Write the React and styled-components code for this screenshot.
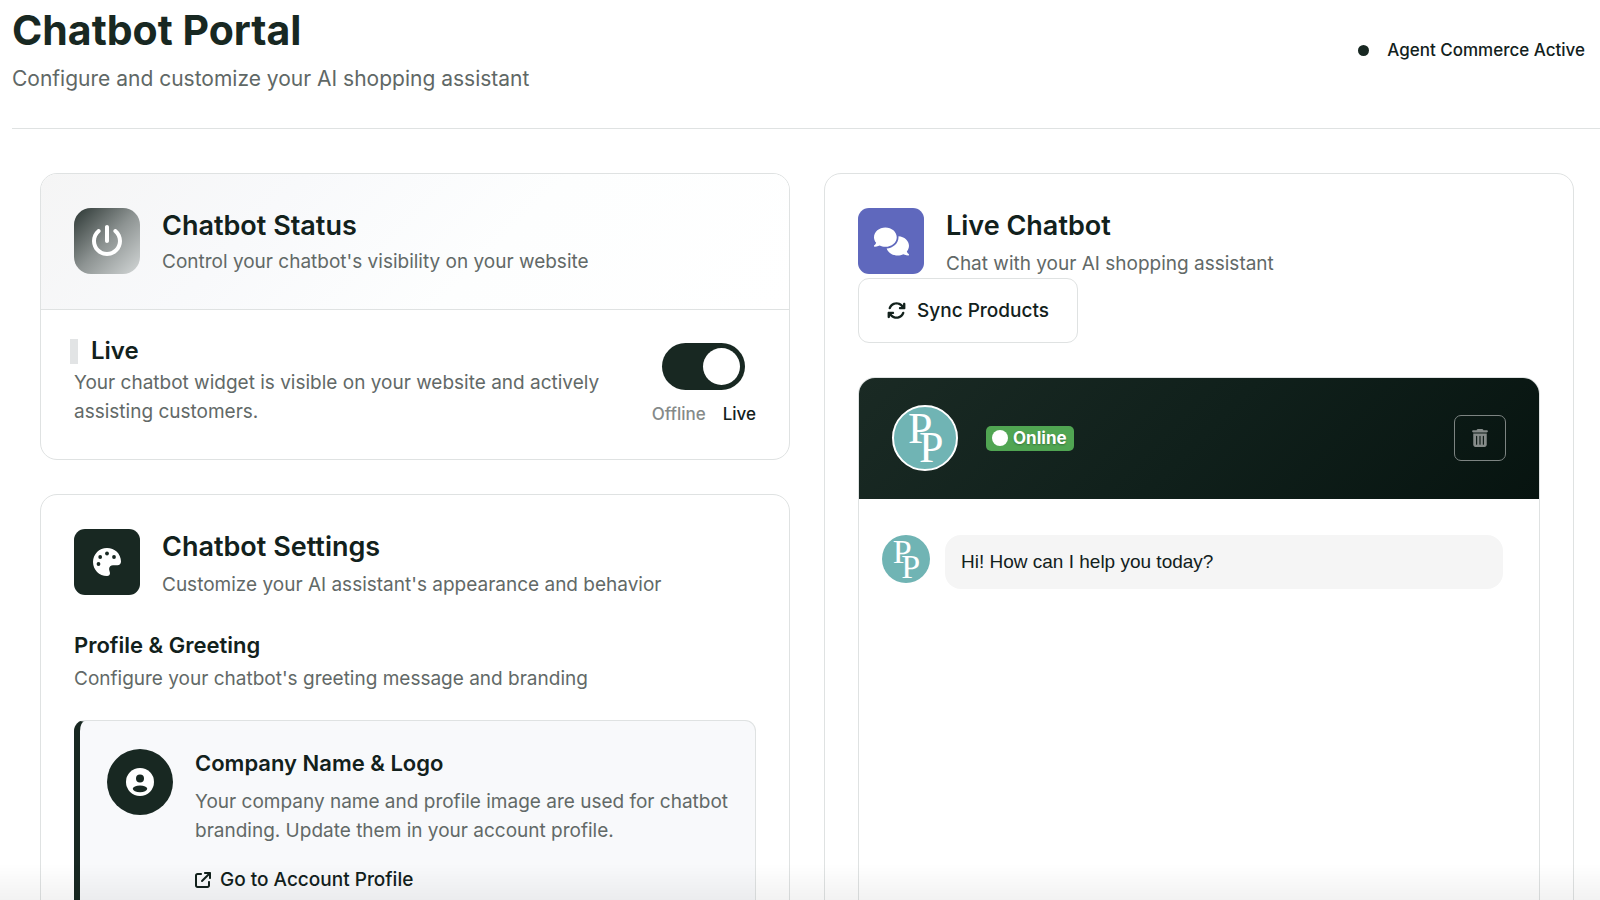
import { useState } from "react";
import styled, { createGlobalStyle } from "styled-components";
import {
  FaArrowsRotate,
  FaArrowUpRightFromSquare,
  FaComments,
  FaPowerOff,
  FaTrashCan,
} from "react-icons/fa6";

const GlobalStyle = createGlobalStyle`
  * {
    box-sizing: border-box;
  }

  body {
    margin: 0;
    background-color: #ffffff;
    color: #12211c;
    font-family: Inter, "Liberation Sans", sans-serif;
    overflow: hidden;
  }

  h1, h2, h3, p {
    margin: 0;
  }

  button {
    font: inherit;
    cursor: pointer;
  }
`;

const Page = styled.div`
  height: 100vh;
  padding-left: 12px;
  overflow: hidden;
`;

const Header = styled.header`
  display: flex;
  align-items: center;
  justify-content: space-between;
  padding: 4px 15px 32px 0;
  border-bottom: 1px solid #dfe2e2;
`;

const PageTitle = styled.h1`
  font-size: 41px;
  font-weight: 700;
  line-height: 52px;
  color: #182822;
`;

const PageSubtitle = styled.p`
  margin-top: 6px;
  font-size: 21px;
  line-height: 34px;
  color: #5f6866;
`;

const AgentStatus = styled.div`
  display: flex;
  align-items: center;
  gap: 18px;
  font-size: 17px;
  font-weight: 500;
  line-height: 24px;
`;

const StatusDot = styled.span`
  width: 11px;
  height: 11px;
  border-radius: 50%;
  background-color: #182822;
`;

const Columns = styled.main`
  display: grid;
  grid-template-columns: 1fr 1fr;
  align-items: start;
  gap: 34px;
  padding: 44px 26px 34px 28px;
`;

const Column = styled.div`
  display: grid;
  gap: 34px;
`;

const Card = styled.section`
  border: 1px solid #dfe2e2;
  border-radius: 17px;
  background-color: #ffffff;
  overflow: hidden;
`;

const CardContent = styled.div`
  padding: 34px 33px;
`;

const StatusHeader = styled.div`
  padding: 34px 33px 33px;
  border-bottom: 1px solid #dfe2e2;
  background: linear-gradient(135deg, #f5f5f5 0%, #f8f9fb 30%, #fdfefe 60%, #ffffff 100%);
`;

const TitleRow = styled.div`
  display: flex;
  align-items: flex-start;
  gap: 22px;
`;

const backgrounds = {
  dark: "#182822",
  indigo: "#5f68bd",
  fade: "linear-gradient(135deg, #2b3633 0%, #8d9392 50%, #d3d7d7 100%)",
};

const IconTile = styled.div`
  display: flex;
  align-items: center;
  justify-content: center;
  flex-shrink: 0;
  width: 66px;
  height: 66px;
  border-radius: ${(props) => props.$radius || "11px"};
  background: ${(props) => backgrounds[props.$tone]};
  color: #ffffff;
`;

const CardTitle = styled.h2`
  font-size: 27px;
  font-weight: 600;
  line-height: 36px;
`;

const Text = styled.p`
  font-size: 19px;
  line-height: 29px;
  color: #626967;
`;

const CardSubtitle = styled(Text)`
  margin-top: ${(props) => (props.$tight ? "3px" : "5px")};
`;

const StatusBody = styled.div`
  display: flex;
  justify-content: space-between;
  gap: 40px;
  padding: 28px 33px 33px;
`;

const LiveHeading = styled.h3`
  display: flex;
  align-items: center;
  gap: 13px;
  margin: 0 0 4px -4px;
  font-size: 24px;
  font-weight: 600;
  line-height: 26px;

  &::before {
    content: "";
    width: 8px;
    height: 25px;
    background-color: #e2e4e5;
  }
`;

const ToggleGroup = styled.div`
  display: flex;
  flex-direction: column;
  align-items: center;
  align-self: flex-end;
  gap: 12px;
`;

const Toggle = styled.input`
  appearance: none;
  display: flex;
  width: 83px;
  height: 47px;
  margin: 0;
  padding: 5px;
  border-radius: 24px;
  background-color: #b9bfbd;
  cursor: pointer;

  &::before {
    content: "";
    width: 37px;
    height: 37px;
    border-radius: 50%;
    background-color: #ffffff;
  }

  &:checked {
    justify-content: flex-end;
    background-color: #182822;
  }
`;

const ToggleLabels = styled.div`
  display: flex;
  gap: 17px;
  font-size: 17px;
  font-weight: 500;
  line-height: 24px;
`;

const ToggleLabel = styled.span`
  color: ${(props) => (props.$active ? "#12211c" : "#858a89")};
`;

const SectionTitle = styled.h3`
  font-size: 22px;
  font-weight: 600;
  line-height: 28px;
`;

const SettingsSection = styled.div`
  display: grid;
  gap: 5px;
  margin-top: 32px;
`;

const Notice = styled.div`
  display: flex;
  align-items: flex-start;
  gap: 22px;
  margin-top: 27px;
  padding: 28px 20px 33px 27px;
  border: 1px solid #dfe2e2;
  border-left: 6px solid #182822;
  border-radius: 11px;
  background-color: #f8f9fb;
`;

const NoticeText = styled(Text)`
  margin: 10px 0 20px;
`;

const ProfileLink = styled.a`
  display: inline-flex;
  align-items: center;
  gap: 9px;
  color: #12211c;
  font-size: 19px;
  font-weight: 500;
  line-height: 29px;
  text-decoration: none;
`;

const SyncButton = styled.button`
  display: flex;
  align-items: center;
  gap: 11px;
  padding: 17px 28px;
  border: 1px solid #dfe2e2;
  border-radius: 11px;
  background-color: #ffffff;
  color: #12211c;
  font-size: 19px;
  font-weight: 500;
  line-height: 29px;
`;

const ChatWindow = styled.div`
  min-height: 660px;
  margin-top: 34px;
  border: 1px solid #dfe2e2;
  border-radius: 17px;
  overflow: hidden;
`;

const ChatHeader = styled.div`
  display: flex;
  align-items: center;
  padding: 27px 33px 28px;
  background: linear-gradient(135deg, #1a2a24 0%, #10201b 50%, #071410 100%);
`;

const Avatar = styled.div`
  display: flex;
  flex-shrink: 0;
  width: ${(props) => props.$size}px;
  height: ${(props) => props.$size}px;
  border: ${(props) => (props.$ring ? "2px solid #ffffff" : "none")};
  border-radius: 50%;
  background-color: #70b4b4;

  svg {
    width: 100%;
    height: 100%;
    overflow: visible;
  }
`;

const OnlineBadge = styled.span`
  display: flex;
  align-items: center;
  gap: 5px;
  margin-left: 28px;
  padding: 0 7px 0 6px;
  border-radius: 5px;
  background-color: #50a552;
  color: #ffffff;
  font-size: 17px;
  font-weight: 700;
  line-height: 25px;
  text-shadow: 0 1px 2px rgba(0, 0, 0, 0.3);

  &::before {
    content: "";
    width: 16px;
    height: 16px;
    border-radius: 50%;
    background-color: #ffffff;
  }
`;

const ClearButton = styled.button`
  display: flex;
  align-items: center;
  justify-content: center;
  width: 52px;
  height: 46px;
  margin-left: auto;
  border: 1px solid #7d8482;
  border-radius: 7px;
  background: transparent;
  color: #858b89;
`;

const Messages = styled.div`
  display: flex;
  align-items: flex-start;
  gap: 15px;
  padding: 36px 36px 36px 23px;
`;

const Bubble = styled.p`
  flex: 1;
  padding: 12px 16px;
  border-radius: 16px;
  background-color: #f5f5f5;
  font-family: "Liberation Sans", Arial, sans-serif;
  font-size: 19px;
  line-height: 30px;
`;

// soft shade along the bottom edge of the window
const BottomFade = styled.div`
  position: fixed;
  right: 0;
  bottom: 0;
  left: 0;
  height: 36px;
  background: linear-gradient(rgba(0, 0, 0, 0), rgba(0, 0, 0, 0.05));
  pointer-events: none;
`;

const PaletteIcon = () => (
  <svg width="30" height="30" viewBox="0 0 30 30" aria-hidden="true">
    <path
      fill="currentColor"
      d="M15 1C7.2 1 1 7.2 1 15s6.2 14 14 14c1.9 0 3-1.200 3-2.800 0-1.500-.9-2.600-.9-4.200 0-2.100 1.700-3.700 3.900-3.700h4.500c2 0 3.500-1.500 3.500-3.800C29 6.800 22.700 1 15 1z"
    />
    <g fill="#182822">
      <circle cx="6.5" cy="17" r="1.9" />
      <circle cx="8.2" cy="10" r="1.9" />
      <circle cx="15" cy="6.5" r="1.9" />
      <circle cx="22" cy="10" r="1.9" />
    </g>
  </svg>
);

const UserIcon = () => (
  <svg width="28" height="28" viewBox="0 0 28 28" aria-hidden="true">
    <circle cx="14" cy="14" r="14" fill="currentColor" />
    <circle cx="14" cy="10.6" r="4" fill="#182822" />
    <ellipse cx="14" cy="20.8" rx="7.2" ry="3.4" fill="#182822" />
  </svg>
);

const Monogram = () => (
  <svg viewBox="0 0 62 62" role="img" aria-label="PP">
    <g fill="#ffffff" fontFamily="Liberation Serif, serif" fontSize="44">
      <text x="14" y="36">P</text>
      <text x="25" y="55">P</text>
    </g>
  </svg>
);

const App = () => {
  const [live, setLive] = useState(true);

  return (
    <>
      <GlobalStyle />
      <Page>
        <Header>
          <div>
            <PageTitle>Chatbot Portal</PageTitle>
            <PageSubtitle>
              Configure and customize your AI shopping assistant
            </PageSubtitle>
          </div>
          <AgentStatus>
            <StatusDot />
            Agent Commerce Active
          </AgentStatus>
        </Header>

        <Columns>
          <Column>
            <Card>
              <StatusHeader>
                <TitleRow>
                  <IconTile $tone="fade" $radius="17px">
                    <FaPowerOff size={32} />
                  </IconTile>
                  <div>
                    <CardTitle>Chatbot Status</CardTitle>
                    <CardSubtitle $tight>
                      Control your chatbot's visibility on your website
                    </CardSubtitle>
                  </div>
                </TitleRow>
              </StatusHeader>
              <StatusBody>
                <div>
                  <LiveHeading>Live</LiveHeading>
                  <Text>
                    Your chatbot widget is visible on your website and actively
                    assisting customers.
                  </Text>
                </div>
                <ToggleGroup>
                  <Toggle
                    type="checkbox"
                    role="switch"
                    aria-label="Chatbot live"
                    checked={live}
                    onChange={(e) => setLive(e.target.checked)}
                  />
                  <ToggleLabels>
                    <ToggleLabel $active={!live}>Offline</ToggleLabel>
                    <ToggleLabel $active={live}>Live</ToggleLabel>
                  </ToggleLabels>
                </ToggleGroup>
              </StatusBody>
            </Card>

            <Card>
              <CardContent>
                <TitleRow>
                  <IconTile $tone="dark">
                    <PaletteIcon />
                  </IconTile>
                  <div>
                    <CardTitle>Chatbot Settings</CardTitle>
                    <CardSubtitle>
                      Customize your AI assistant's appearance and behavior
                    </CardSubtitle>
                  </div>
                </TitleRow>
                <SettingsSection>
                  <SectionTitle>Profile &amp; Greeting</SectionTitle>
                  <Text>
                    Configure your chatbot's greeting message and branding
                  </Text>
                </SettingsSection>
                <Notice>
                  <IconTile $tone="dark" $radius="50%">
                    <UserIcon />
                  </IconTile>
                  <div>
                    <SectionTitle>Company Name &amp; Logo</SectionTitle>
                    <NoticeText>
                      Your company name and profile image are used for chatbot
                      branding. Update them in your account profile.
                    </NoticeText>
                    <ProfileLink href="#profile">
                      <FaArrowUpRightFromSquare size={16} />
                      Go to Account Profile
                    </ProfileLink>
                  </div>
                </Notice>
              </CardContent>
            </Card>
          </Column>

          <Card>
            <CardContent>
              <TitleRow>
                <IconTile $tone="indigo">
                  <FaComments size={35} />
                </IconTile>
                <div>
                  <CardTitle>Live Chatbot</CardTitle>
                  <CardSubtitle>Chat with your AI shopping assistant</CardSubtitle>
                </div>
              </TitleRow>
              <SyncButton type="button">
                <FaArrowsRotate size={19} />
                Sync Products
              </SyncButton>
              <ChatWindow>
                <ChatHeader>
                  <Avatar $size={66} $ring>
                    <Monogram />
                  </Avatar>
                  <OnlineBadge>Online</OnlineBadge>
                  <ClearButton type="button" aria-label="Clear chat">
                    <FaTrashCan size={18} />
                  </ClearButton>
                </ChatHeader>
                <Messages>
                  <Avatar $size={48}>
                    <Monogram />
                  </Avatar>
                  <Bubble>Hi! How can I help you today?</Bubble>
                </Messages>
              </ChatWindow>
            </CardContent>
          </Card>
        </Columns>
      </Page>
      <BottomFade />
    </>
  );
};

export default App;
